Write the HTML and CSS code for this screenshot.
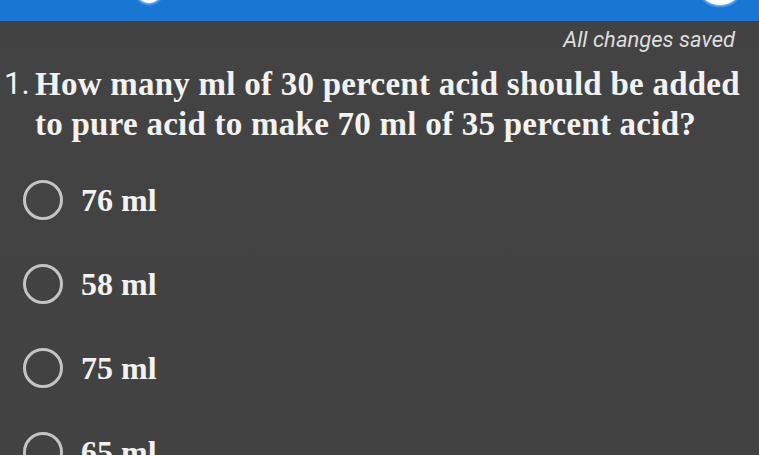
FILE: index.html
```html
<!DOCTYPE html>
<html>
<head>
<meta charset="utf-8">
<link rel="stylesheet" href="styles.css">
</head>
<body>
<div class="page">
  <header class="appbar">
    <span class="blob blob-left"></span>
    <span class="blob blob-right"></span>
  </header>
  <div class="status">All changes saved</div>
  <div class="question">
    <span class="num">1.</span>
    <p class="qtext">How many ml of 30 percent acid should be added to pure acid to make 70 ml of 35 percent acid?</p>
  </div>
  <ul class="options">
    <li class="option"><span class="radio"></span><span class="label">76 ml</span></li>
    <li class="option"><span class="radio"></span><span class="label">58 ml</span></li>
    <li class="option"><span class="radio"></span><span class="label">75 ml</span></li>
    <li class="option"><span class="radio"></span><span class="label">65 ml</span></li>
  </ul>
</div>
</body>
</html>
```
FILE: styles.css
```css
html, body {
  margin: 0;
  padding: 0;
  background: #424242;
  overflow: hidden;
}
.page {
  width: 759px;
  height: 455px;
  overflow: hidden;
  background: linear-gradient(#373737 0, #414141 14px, #434343 60px, #424242 100%);
}
.appbar {
  position: relative;
  height: 21px;
  background: #1976d2;
  overflow: hidden;
}
.blob {
  position: absolute;
  background: #fff;
  border-radius: 50%;
  box-shadow: 0 0 3px 1px rgba(220,235,255,0.8);
}
.blob-left {
  left: 133px;
  top: -40px;
  width: 32px;
  height: 43px;
}
.blob-right {
  left: 697px;
  top: -40px;
  width: 46px;
  height: 45px;
}
.status {
  text-align: right;
  padding-right: 24px;
  font-family: Roboto, "Liberation Sans", sans-serif;
  font-style: italic;
  font-size: 22px;
  color: #dedede;
  line-height: 24px;
  margin-top: 7px;
}
.question {
  display: flex;
  margin-top: 12px;
  color: #f2f2f2;
}
.num {
  width: 35px;
  padding-left: 4px;
  box-sizing: border-box;
  font-family: Roboto, "Liberation Sans", sans-serif;
  font-size: 31px;
  line-height: 40px;
}
.qtext {
  margin: 0;
  width: 715px;
  font-family: "Liberation Serif", serif;
  font-weight: bold;
  font-size: 33px;
  letter-spacing: 0.25px;
  line-height: 40px;
}
.options {
  list-style: none;
  margin: 14px 0 0 0;
  padding: 0 0 0 23px;
}
.option {
  display: flex;
  align-items: center;
  height: 84px;
}
.radio {
  width: 34px;
  height: 34px;
  border: 3.5px solid #c4c4c4;
  border-radius: 50%;
  flex: none;
}
.label {
  margin-left: 18px;
  font-family: "Liberation Serif", serif;
  font-weight: bold;
  font-size: 32px;
  color: #f2f2f2;
}
```
